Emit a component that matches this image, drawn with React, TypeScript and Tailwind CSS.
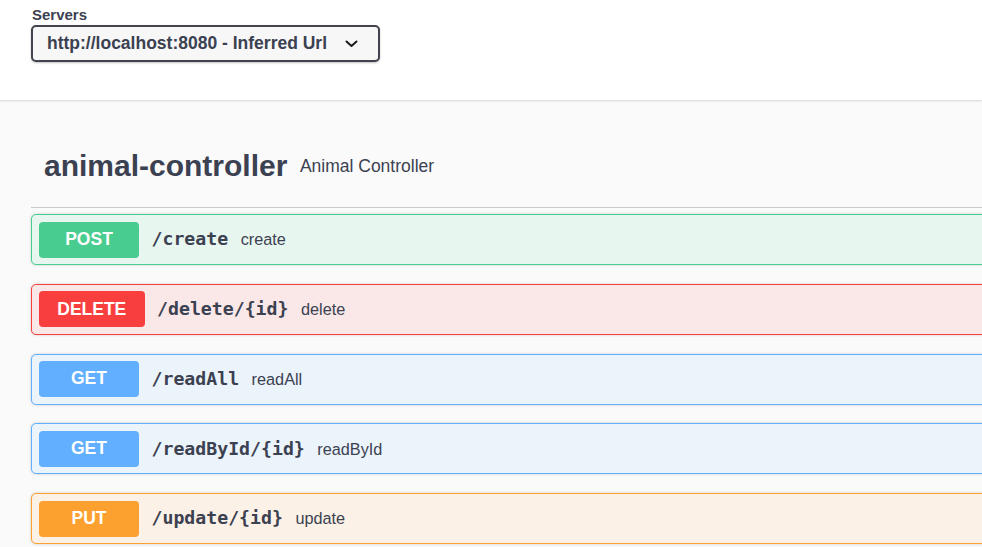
import React from "react";

type Op = {
  method: string;
  path: string;
  summary: string;
  badge: string;
  border: string;
  bg: string;
};

const ops: Op[] = [
  {
    method: "POST",
    path: "/create",
    summary: "create",
    badge: "bg-[#49cc90]",
    border: "border-[#49cc90]",
    bg: "bg-[#e8f6f0]",
  },
  {
    method: "DELETE",
    path: "/delete/{id}",
    summary: "delete",
    badge: "bg-[#f93e3e]",
    border: "border-[#f93e3e]",
    bg: "bg-[#fae7e7]",
  },
  {
    method: "GET",
    path: "/readAll",
    summary: "readAll",
    badge: "bg-[#61affe]",
    border: "border-[#61affe]",
    bg: "bg-[#ebf3fb]",
  },
  {
    method: "GET",
    path: "/readById/{id}",
    summary: "readById",
    badge: "bg-[#61affe]",
    border: "border-[#61affe]",
    bg: "bg-[#ebf3fb]",
  },
  {
    method: "PUT",
    path: "/update/{id}",
    summary: "update",
    badge: "bg-[#fca130]",
    border: "border-[#fca130]",
    bg: "bg-[#fbf1e6]",
  },
];

const OpBlock = ({ op }: { op: Op }) => {
  return (
    <div
      className={`flex items-center h-[51px] px-[7px] border rounded-[5px] shadow-[0_0_3px_rgba(0,0,0,0.19)] ${op.border} ${op.bg}`}
    >
      <div
        className={`h-[36px] min-w-[100px] px-[18.25px] rounded-[4px] flex items-center justify-center text-white font-bold text-[17.5px] leading-none ${op.badge}`}
      >
        {op.method}
      </div>
      <div className="ml-[12.5px] font-['DejaVu_Sans_Mono',monospace] font-bold text-[18.2px] leading-none">
        {op.path}
      </div>
      <div className="ml-[12.5px] text-[16.25px] leading-none">{op.summary}</div>
    </div>
  );
};

export default function App() {
  return (
    <div className="w-[982px] h-[547px] overflow-hidden bg-[#fafafa] text-[#3b4151] font-['Liberation_Sans',Arial,sans-serif]">
      {/* servers bar */}
      <div className="relative z-10 h-[100px] bg-white shadow-[0_1px_2px_rgba(0,0,0,0.15)] pl-[31px] pt-[6px]">
        <div className="ml-[1px] text-[15px] font-bold leading-[18px]">Servers</div>
        <div className="mt-[1px] w-[349px] h-[37px] flex items-center pl-[14px] bg-[#f7f7f7] border-2 border-[#41444e] rounded-[5px] shadow-[0_1px_2px_rgba(0,0,0,0.25)]">
          <span className="text-[17.5px] font-bold leading-none">
            http://localhost:8080 - Inferred Url
          </span>
          <svg
            className="ml-auto mr-[20px]"
            width="13"
            height="8"
            viewBox="0 0 13 8"
          >
            <polyline
              points="1.5,1.5 6.5,6 11.5,1.5"
              fill="none"
              stroke="#1b1b1b"
              strokeWidth="2"
              strokeLinecap="round"
              strokeLinejoin="round"
            />
          </svg>
        </div>
      </div>

      {/* tag section */}
      <div className="pl-[31px] pt-[48px] mr-[-60px]">
        <div className="flex items-center pl-[13px] pb-[23px] border-b-[1.25px] border-[#c9cacd]">
          <h3 className="text-[30px] font-bold leading-[36px]">animal-controller</h3>
          <span className="ml-[12.5px] text-[17.5px] leading-[22px]">Animal Controller</span>
        </div>
        <div className="mt-[6px] flex flex-col gap-y-[18.75px]">
          {ops.map((op) => (
            <OpBlock key={op.path} op={op} />
          ))}
        </div>
      </div>
    </div>
  );
}
